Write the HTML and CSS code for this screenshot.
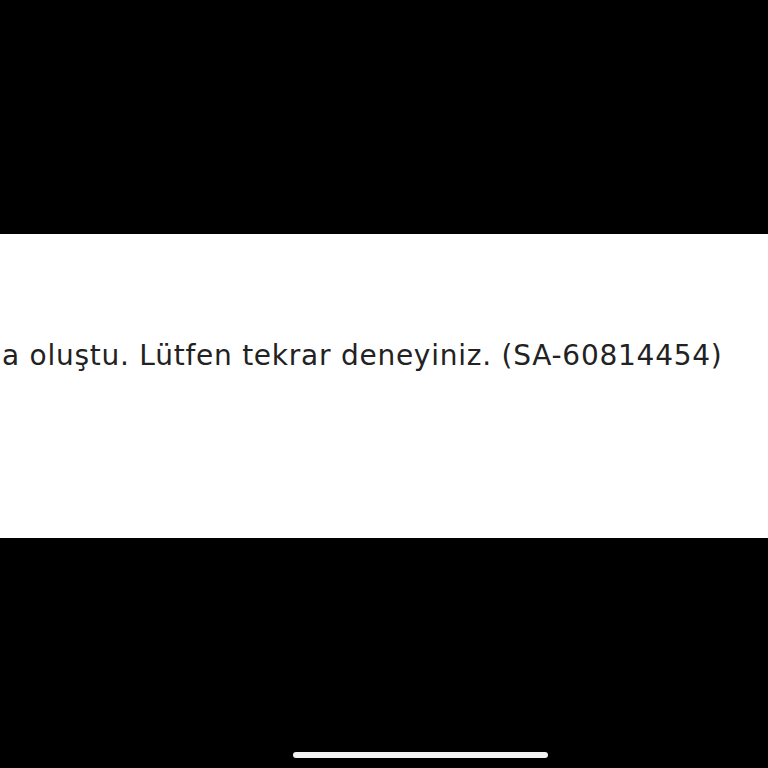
FILE: index.html
```html
<!DOCTYPE html>
<html>
<head>
<meta charset="utf-8">
<link rel="stylesheet" href="styles.css">
</head>
<body>
<div class="screen">
  <div class="top"></div>
  <div class="band">
    <p class="msg">a oluştu. Lütfen tekrar deneyiniz. (SA-60814454)</p>
  </div>
  <div class="bottom">
    <div class="home"></div>
  </div>
</div>
</body>
</html>
```

FILE: styles.css
```css
html, body {
  margin: 0;
  padding: 0;
  background: #000;
}
.screen {
  width: 768px;
  height: 768px;
  display: flex;
  flex-direction: column;
  overflow: hidden;
}
.top {
  height: 234px;
  background: #000;
}
.band {
  height: 304px;
  background: #fff;
  display: flex;
  flex-direction: column;
  padding-top: 102px;
  box-sizing: border-box;
}
.msg {
  margin: 0;
  padding-left: 2px;
  font-family: "DejaVu Sans", sans-serif;
  font-size: 28px;
  letter-spacing: 0.75px;
  line-height: 40px;
  color: #222;
  white-space: nowrap;
}
.bottom {
  flex: 1;
  background: #000;
  display: flex;
  justify-content: flex-start;
  align-items: flex-end;
  padding-bottom: 10px;
}
.home {
  width: 255px;
  height: 6px;
  margin-left: 293px;
  border-radius: 3px;
  background: #f2f2f2;
}
```
